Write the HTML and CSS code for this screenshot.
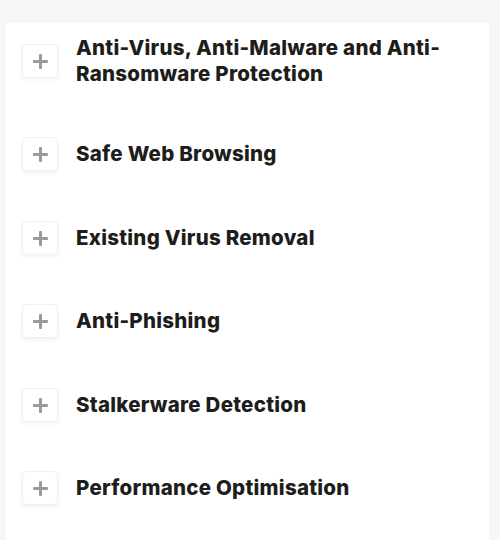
FILE: index.html
```html
<!DOCTYPE html>
<html lang="en">
<head>
<meta charset="utf-8">
<title>Features</title>
<link rel="stylesheet" href="styles.css">
</head>
<body>
<div class="card">
  <ul class="list">
    <li class="row"><span class="toggle" aria-hidden="true"></span><span class="title">Anti-Virus, Anti-Malware and Anti-Ransomware Protection</span></li>
    <li class="row"><span class="toggle" aria-hidden="true"></span><span class="title">Safe Web Browsing</span></li>
    <li class="row"><span class="toggle" aria-hidden="true"></span><span class="title">Existing Virus Removal</span></li>
    <li class="row"><span class="toggle" aria-hidden="true"></span><span class="title">Anti-Phishing</span></li>
    <li class="row"><span class="toggle" aria-hidden="true"></span><span class="title">Stalkerware Detection</span></li>
    <li class="row"><span class="toggle" aria-hidden="true"></span><span class="title">Performance Optimisation</span></li>
  </ul>
</div>
</body>
</html>
```
FILE: styles.css
```css
html, body {
  margin: 0;
  padding: 0;
  background: #f6f6f6;
}
body {
  font-family: Inter, "Liberation Sans", sans-serif;
  color: #1d1d1b;
}
.card {
  margin: 23px 0 0 6px;
  width: 483px;
  height: 517px;
  overflow: hidden;
  background: #ffffff;
  box-sizing: border-box;
  padding: 12px 16px 0 16px;
}
.list {
  list-style: none;
  margin: 0;
  padding: 0;
  display: flex;
  flex-direction: column;
  gap: 51.4px;
}
.row {
  display: flex;
  align-items: center;
  gap: 18px;
}
.toggle {
  flex: none;
  position: relative;
  width: 36px;
  height: 34px;
  margin: -1px 0;
  box-sizing: border-box;
  border: 1px solid #f1f1f1;
  border-radius: 4px;
  background: #fff;
  box-shadow: 0 2px 4px rgba(0, 0, 0, 0.05);
}
.toggle::before,
.toggle::after {
  content: "";
  position: absolute;
  left: 50%;
  top: 50%;
  background: #9a9a9a;
  border-radius: 1px;
}
.toggle::before {
  width: 15px;
  height: 3px;
  margin: -1px 0 0 -7.5px;
}
.toggle::after {
  width: 3px;
  height: 15px;
  margin: -7px 0 0 -1.5px;
}
.title {
  font-size: 20.5px;
  font-weight: 800;
  line-height: 26px;
  letter-spacing: 0.25px;
}
```
